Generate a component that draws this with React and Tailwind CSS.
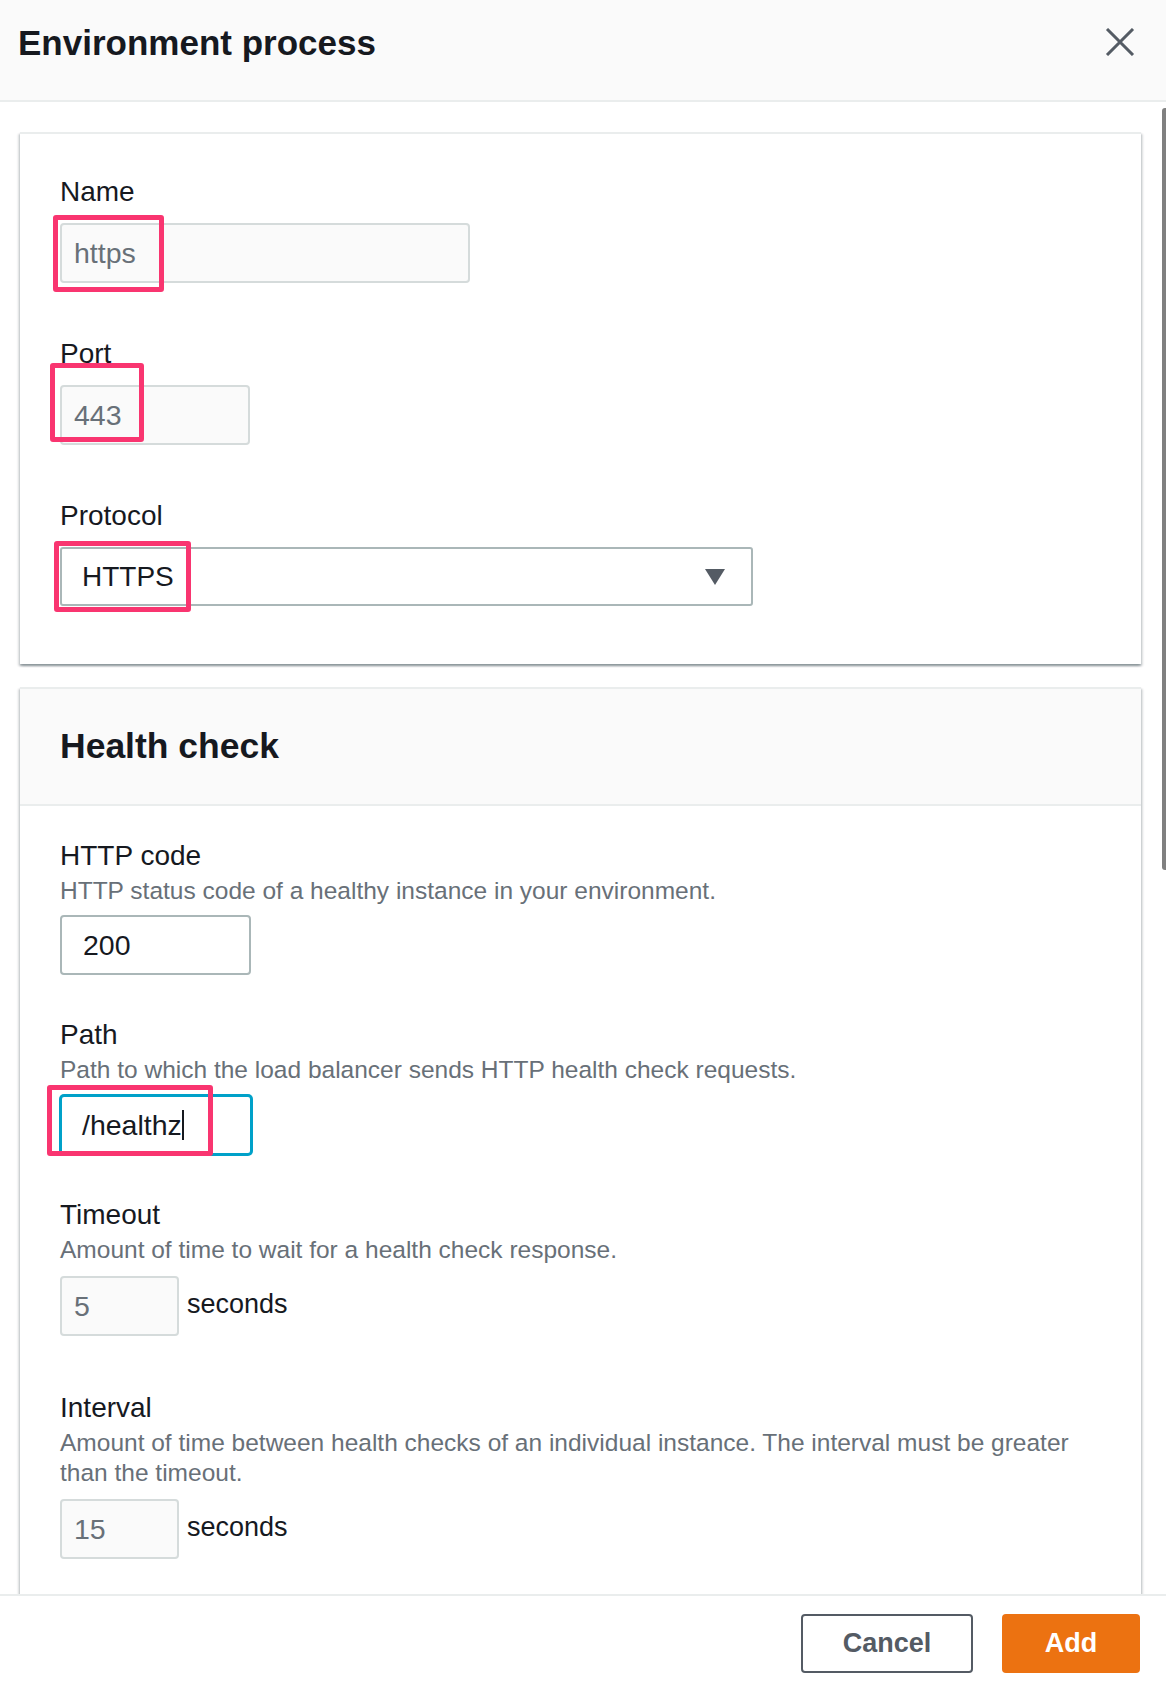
import React from "react";

function Pink({ className }) {
  return (
    <div
      className={`pointer-events-none absolute z-10 rounded-[3px] border-[5px] border-[#f93570] ${className}`}
    />
  );
}

function Label({ children }) {
  return (
    <div className="text-[28px] leading-[40px] text-[#16191f]">{children}</div>
  );
}

function Desc({ children }) {
  return (
    <div className="text-[24.5px] leading-[30px] text-[#687078]">{children}</div>
  );
}

function ReadOnlyInput({ value, width }) {
  return (
    <div
      className={`flex h-[60px] items-center rounded-[4px] border-2 border-[#d5dbdb] bg-[#fafafa] pl-[12px] text-[28.5px] text-[#687078] ${width}`}
    >
      {value}
    </div>
  );
}

function SecondsRow({ value }) {
  return (
    <div className="mt-[11px] flex items-center gap-[8px]">
      <ReadOnlyInput value={value} width="w-[119px]" />
      <span className="mb-[3px] text-[27px] text-[#16191f]">seconds</span>
    </div>
  );
}

export default function App() {
  return (
    <div className="flex h-[1684px] w-full flex-col overflow-hidden bg-white font-['Liberation_Sans',Arial,sans-serif]">
      {/* header */}
      <div className="flex h-[102px] shrink-0 items-start justify-between border-b-2 border-[#eaeded] bg-[#fafafa] pl-[18px] pr-[31px]">
        <h1 className="pt-[23px] text-[35px] font-bold leading-[40px] text-[#16191f]">
          Environment process
        </h1>
        <svg width="30" height="28" viewBox="0 0 30 28" className="mt-[28px]">
          <path
            d="M2 1 L28 27 M28 1 L2 27"
            stroke="#545b64"
            strokeWidth="3"
            fill="none"
          />
        </svg>
      </div>

      {/* scrolling body */}
      <div className="relative flex-1 overflow-hidden pl-[20px] pr-[25px] pt-[30px]">
        <div className="absolute right-0 top-[6px] h-[762px] w-[4px] rounded-l-[3px] bg-[#808080]" />

        {/* card 1 */}
        <div className="border-t-2 border-[#eaeded] bg-white pb-[58px] pl-[40px] pr-[40px] pt-[38px] shadow-[0_2px_2px_0_rgba(0,28,36,0.3),2px_2px_2px_0_rgba(0,28,36,0.12),-2px_2px_2px_0_rgba(0,28,36,0.12)]">
          <Label>Name</Label>
          <div className="relative mt-[11px] w-[410px]">
            <ReadOnlyInput value="https" width="w-[410px]" />
            <Pink className="-left-[7px] -top-[8px] h-[77px] w-[111px]" />
          </div>

          <div className="mt-[51px]">
            <Label>Port</Label>
          </div>
          <div className="relative mt-[11px] w-[190px]">
            <ReadOnlyInput value="443" width="w-[190px]" />
            <Pink className="-left-[10px] -top-[22px] h-[79px] w-[94px]" />
          </div>

          <div className="mt-[51px]">
            <Label>Protocol</Label>
          </div>
          <div className="relative mt-[11px] w-[693px]">
            <div className="flex h-[59px] w-[693px] items-center justify-between rounded-[3px] border-2 border-[#aab7b8] bg-white pl-[20px] pr-[26px] text-[28px] text-[#16191f]">
              <span>HTTPS</span>
              <svg width="20" height="16" viewBox="0 0 20 16">
                <polygon points="0,0 20,0 10,16" fill="#545b64" />
              </svg>
            </div>
            <Pink className="-left-[6px] -top-[6px] h-[71px] w-[137px]" />
          </div>
        </div>

        {/* card 2 */}
        <div className="mt-[23px] border-t-2 border-[#eaeded] bg-white shadow-[0_2px_2px_0_rgba(0,28,36,0.3),2px_2px_2px_0_rgba(0,28,36,0.12),-2px_2px_2px_0_rgba(0,28,36,0.12)]">
          <div className="flex h-[117px] items-center border-b-2 border-[#eaeded] bg-[#fafafa] pl-[40px]">
            <h2 className="text-[35.5px] font-bold text-[#16191f]">Health check</h2>
          </div>

          <div className="pb-[60px] pl-[40px] pr-[40px] pt-[30px]">
            <Label>HTTP code</Label>
            <Desc>HTTP status code of a healthy instance in your environment.</Desc>
            <div className="mt-[9px] flex h-[60px] w-[191px] items-center rounded-[4px] border-2 border-[#aab7b8] bg-white pl-[21px] text-[28.5px] text-[#16191f]">
              200
            </div>

            <div className="mt-[40px]">
              <Label>Path</Label>
              <Desc>
                Path to which the load balancer sends HTTP health check requests.
              </Desc>
            </div>
            <div className="relative mt-[10px] w-[192px]">
              <div className="flex h-[60px] w-[192px] items-center rounded-[4px] border-2 border-[#00a1c9] bg-white pl-[20px] text-[28.5px] text-[#16191f] shadow-[0_0_0_1px_#00a1c9]">
                <span>/healthz</span>
                <span className="h-[30px] w-[2px] bg-[#16191f]" />
              </div>
              <Pink className="-left-[13px] -top-[10px] h-[71px] w-[166px]" />
            </div>

            <div className="mt-[40px]">
              <Label>Timeout</Label>
              <Desc>Amount of time to wait for a health check response.</Desc>
            </div>
            <SecondsRow value="5" />

            <div className="mt-[52px]">
              <Label>Interval</Label>
              <Desc>
                Amount of time between health checks of an individual instance. The interval must be greater
                <br />
                than the timeout.
              </Desc>
            </div>
            <SecondsRow value="15" />
          </div>
        </div>
      </div>

      {/* footer */}
      <div className="flex h-[90px] shrink-0 items-start justify-end gap-[29px] border-t-2 border-[#eaeded] bg-white pr-[26px] pt-[18px]">
        <button className="h-[59px] w-[172px] rounded-[4px] border-2 border-[#545b64] bg-white text-[27px] font-bold text-[#545b64]">
          Cancel
        </button>
        <button className="h-[59px] w-[138px] rounded-[4px] bg-[#ec7211] text-[27px] font-bold text-white">
          Add
        </button>
      </div>
    </div>
  );
}
